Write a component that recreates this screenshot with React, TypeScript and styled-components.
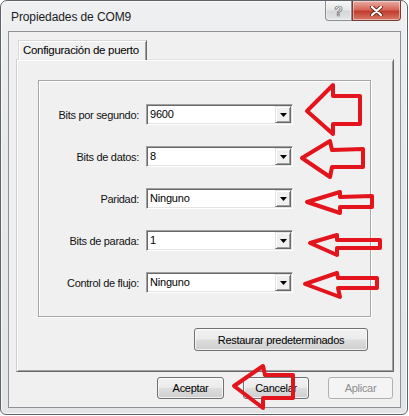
import * as React from 'react';
import styled, { createGlobalStyle } from 'styled-components';

const PageStyle = createGlobalStyle`
  html,
  body {
    margin: 0;
    padding: 0;
    background: #ffffff;
    font-family: 'Liberation Sans', Arial, sans-serif;
  }
`;

const Stage = styled.div`
  position: relative;
  width: 409px;
  height: 416px;
  overflow: hidden;
`;

const Window = styled.div`
  box-sizing: border-box;
  width: 408px;
  height: 415px;
  display: flex;
  flex-direction: column;
  padding: 0 6px 6px 7px;
  border: 1px solid #5f6367;
  border-radius: 7px 7px 6px 6px;
  background: linear-gradient(#eef0f2, #e6e8ea 40%, #e3e5e7);
  box-shadow: inset 0 0 0 1px rgba(255, 255, 255, 0.75);
`;

const TitleBar = styled.div`
  display: flex;
  align-items: flex-start;
  height: 30px;
  flex-shrink: 0;
`;

const Title = styled.div`
  flex: 1;
  padding: 9px 0 0 3px;
  font-size: 12px;
  line-height: 14px;
  color: #1c1c1c;
  letter-spacing: -0.1px;
`;

const CaptionGroup = styled.div`
  display: flex;
`;

const CaptionButton = styled.div<{ $variant: 'help' | 'close' }>`
  box-sizing: border-box;
  width: ${(p) => (p.$variant === 'help' ? 27 : 49)}px;
  height: 20px;
  display: flex;
  align-items: center;
  justify-content: center;
  border: 1px solid ${(p) => (p.$variant === 'help' ? '#8a8e93' : '#7b3b33')};
  border-top: none;
  border-radius: ${(p) => (p.$variant === 'help' ? '0 0 0 4px' : '0 0 4px 0')};
  background: ${(p) =>
    p.$variant === 'help'
      ? 'linear-gradient(#f6f6f6, #e8e8e8 45%, #d4d6d8 55%, #e4e6e8)'
      : 'linear-gradient(#e9aca2, #d6685a 45%, #c13d2c 55%, #d77a69)'};
  box-shadow: inset 0 0 0 1px rgba(255, 255, 255, 0.45);
`;

const HelpGlyph = styled.span`
  font-family: 'Liberation Sans', Arial, sans-serif;
  font-weight: bold;
  font-size: 14px;
  line-height: 14px;
  color: #f7f7f7;
  -webkit-text-stroke: 0.7px #6d7074;
`;

const Client = styled.div`
  display: flex;
  flex-direction: column;
  padding: 8px 6px 8px 7px;
  border: 1px solid #8e9196;
  background: #f0f0f0;
`;

const TabStrip = styled.div`
  display: flex;
  padding-left: 2px;
  margin-bottom: -1px;
  position: relative;
  z-index: 1;
`;

const Tab = styled.div`
  box-sizing: border-box;
  height: 20px;
  padding: 0 7px 0 4px;
  font-size: 11.5px;
  line-height: 19px;
  letter-spacing: -0.3px;
  color: #000;
  background: #f0f0f0;
  border: 1px solid #d8d8d8;
  border-right-color: #696969;
  border-bottom: none;
  box-shadow: inset 1px 1px #ffffff, inset -1px 0 #a0a0a0;
`;

const TabPanel = styled.div`
  display: flex;
  flex-direction: column;
  padding: 20px 22px 20px 21px;
  border: 1px solid;
  border-color: #e3e3e3 #696969 #696969 #cfcfcf;
  box-shadow: inset 1px 1px #ffffff, inset -1px -1px #a0a0a0;
  background: #f0f0f0;
`;

const GroupBox = styled.div`
  box-sizing: border-box;
  height: 237px;
  display: grid;
  grid-template-columns: 103px 147px;
  grid-auto-rows: 21px;
  column-gap: 4px;
  row-gap: 21px;
  align-content: start;
  padding-top: 23px;
  border: 1px solid #a7a7a7;
  box-shadow: inset 1px 1px #ffffff, 1px 1px 0 #ffffff;
`;

const FieldLabel = styled.div`
  align-self: center;
  text-align: right;
  padding-right: 3px;
  font-size: 11px;
  letter-spacing: -0.3px;
  color: #111;
  white-space: nowrap;
`;

const Combo = styled.div`
  box-sizing: border-box;
  height: 21px;
  display: flex;
  align-items: center;
  padding: 1px;
  background: #ffffff;
  border: 1px solid;
  border-color: #a0a0a0 #ffffff #ffffff #a0a0a0;
  box-shadow: inset 1px 1px #696969, inset -1px -1px #e3e3e3;
`;

const ComboValue = styled.span`
  flex: 1;
  padding-left: 2px;
  font-size: 11px;
  line-height: 17px;
  letter-spacing: -0.2px;
  color: #000;
`;

const DropButton = styled.div`
  box-sizing: border-box;
  width: 16px;
  height: 17px;
  display: flex;
  align-items: center;
  justify-content: center;
  background: #f0f0f0;
  border: 1px solid;
  border-color: #e3e3e3 #696969 #696969 #e3e3e3;
  box-shadow: inset 1px 1px #ffffff, inset -1px -1px #a0a0a0;
`;

const PushButton = styled.button<{ $width: number; $height?: number }>`
  box-sizing: border-box;
  width: ${(p) => p.$width}px;
  height: ${(p) => p.$height ?? 22}px;
  padding: 0;
  font-family: 'Liberation Sans', Arial, sans-serif;
  font-size: 11px;
  letter-spacing: -0.3px;
  color: #000;
  border: 1px solid #707070;
  border-radius: 3px;
  background: linear-gradient(#f2f2f2, #ebebeb 48%, #dddddd 52%, #cfcfcf);
  box-shadow: inset 0 0 0 1px rgba(255, 255, 255, 0.7);

  &:disabled {
    color: #8d8d8d;
    border-color: #adb2b5;
    background: #f4f4f4;
    box-shadow: none;
  }
`;

const RestoreButton = styled(PushButton)`
  align-self: flex-end;
  margin: 11px 3px 0 0;
`;

const ButtonRow = styled.div`
  display: flex;
  justify-content: flex-end;
  gap: 19px;
  margin-top: 5px;
  padding-right: 1px;
`;

const Annotations = styled.svg`
  position: absolute;
  top: 0;
  left: 0;
  pointer-events: none;
`;

const fields = [
  { label: 'Bits por segundo:', value: '9600' },
  { label: 'Bits de datos:', value: '8' },
  { label: 'Paridad:', value: 'Ninguno' },
  { label: 'Bits de parada:', value: '1' },
  { label: 'Control de flujo:', value: 'Ninguno' },
];

// hand drawn red arrows pointing at the settings
const arrows = [
  '307,111 333,85 333,96 360,96 360,124 333,124 333,134',
  '302,158 330,141 332,150 363,149 363,167 332,167 330,177',
  '307,202 340,192 340,197 372,196 372,207 340,207 340,213',
  '310,243 337,235 337,240 380,240 380,248 337,248 337,255',
  '305,284 337,273 338,278 377,278 377,288 338,288 340,297',
  '234,386 263,366 265,375 293,375 293,398 263,398 263,408',
];

const DropArrow = () => (
  <svg width="7" height="4" viewBox="0 0 7 4">
    <polygon points="0,0 7,0 3.5,4" fill="#000" />
  </svg>
);

const CloseGlyph = () => (
  <svg width="13" height="10" viewBox="0 0 13 10">
    <path d="M2 1 L11 9 M11 1 L2 9" stroke="#6b2a22" strokeWidth="4" strokeLinecap="round" />
    <path d="M2 1 L11 9 M11 1 L2 9" stroke="#ffffff" strokeWidth="2.2" strokeLinecap="round" />
  </svg>
);

export default function App() {
  return (
    <Stage>
      <PageStyle />
      <Window>
        <TitleBar>
          <Title>Propiedades de COM9</Title>
          <CaptionGroup>
            <CaptionButton $variant="help">
              <HelpGlyph>?</HelpGlyph>
            </CaptionButton>
            <CaptionButton $variant="close">
              <CloseGlyph />
            </CaptionButton>
          </CaptionGroup>
        </TitleBar>

        <Client>
          <TabStrip>
            <Tab>Configuración de puerto</Tab>
          </TabStrip>
          <TabPanel>
            <GroupBox>
              {fields.map((f) => (
                <React.Fragment key={f.label}>
                  <FieldLabel>{f.label}</FieldLabel>
                  <Combo>
                    <ComboValue>{f.value}</ComboValue>
                    <DropButton>
                      <DropArrow />
                    </DropButton>
                  </Combo>
                </React.Fragment>
              ))}
            </GroupBox>
            <RestoreButton $width={174} $height={23}>
              Restaurar predeterminados
            </RestoreButton>
          </TabPanel>

          <ButtonRow>
            <PushButton $width={67}>Aceptar</PushButton>
            <PushButton $width={66}>Cancelar</PushButton>
            <PushButton $width={65} disabled>
              Aplicar
            </PushButton>
          </ButtonRow>
        </Client>
      </Window>

      <Annotations width="409" height="416" viewBox="0 0 409 416">
        {arrows.map((pts) => (
          <polygon
            key={pts}
            points={pts}
            fill="none"
            stroke="#e3141c"
            strokeWidth="4"
            strokeLinejoin="round"
          />
        ))}
      </Annotations>
    </Stage>
  );
}
